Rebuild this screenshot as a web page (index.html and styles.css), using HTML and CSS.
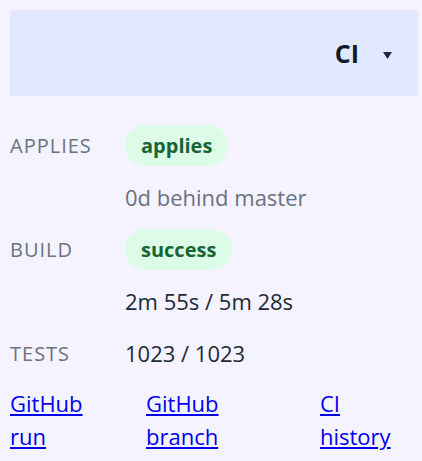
FILE: index.html
```html
<!DOCTYPE html>
<html lang="en">
<head>
    <meta charset="UTF-8">
    <meta name="viewport" content="width=device-width, initial-scale=1.0">
    <title>CI status</title>
    <link rel="stylesheet" href="styles.css">
</head>
<body>
    <div class="panel">
        <div class="panel-head">
            <span class="panel-title">CI</span>
            <svg class="caret" width="9" height="7" viewBox="0 0 9 7">
                <path d="M0 0 H9 L4.5 7 Z" fill="#1f2937"/>
            </svg>
        </div>

        <div class="status-grid">
            <div class="label">Applies</div>
            <div class="value"><span class="pill">applies</span></div>

            <div class="label"></div>
            <div class="value muted">0d behind master</div>

            <div class="label">Build</div>
            <div class="value"><span class="pill">success</span></div>

            <div class="label"></div>
            <div class="value">2m 55s / 5m 28s</div>

            <div class="label">Tests</div>
            <div class="value">1023 / 1023</div>
        </div>

        <div class="links">
            <a href="#">GitHub run</a>
            <a href="#">GitHub branch</a>
            <a href="#">CI history</a>
        </div>
    </div>
</body>
</html>
```

FILE: styles.css
```css
body {
    margin: 0;
    font-family: 'Open Sans', 'Noto Sans', sans-serif;
    background-color: #f4f3ff;
    color: #1f2937;
}
.panel {
    padding: 10px 4px 0 10px;
}
.panel-head {
    background: #e2e8ff;
    height: 86px;
    display: flex;
    align-items: center;
    justify-content: flex-end;
    padding-right: 26px;
}
.panel-title {
    font-size: 25px;
    font-weight: 700;
    color: #111827;
}
.caret {
    margin-left: 24px;
    margin-top: 4px;
}
.status-grid {
    display: grid;
    grid-template-columns: 115px 1fr;
    grid-auto-rows: 52px;
    align-items: center;
    margin-top: 23px;
    font-size: 22px;
}
.label {
    text-transform: uppercase;
    color: #6b7280;
    font-size: 20px;
    letter-spacing: 1px;
}
.muted {
    color: #6b7280;
}
.pill {
    display: inline-block;
    background: #dcfce7;
    color: #166534;
    font-weight: 700;
    font-size: 20px;
    line-height: 41px;
    padding: 0 16px;
    border-radius: 21px;
}
.links {
    display: grid;
    grid-template-columns: 136px 174px 1fr;
    margin-top: 8px;
    font-size: 22px;
    line-height: 33px;
}
.links a {
    color: #0000ee;
    width: 90px;
}
```
